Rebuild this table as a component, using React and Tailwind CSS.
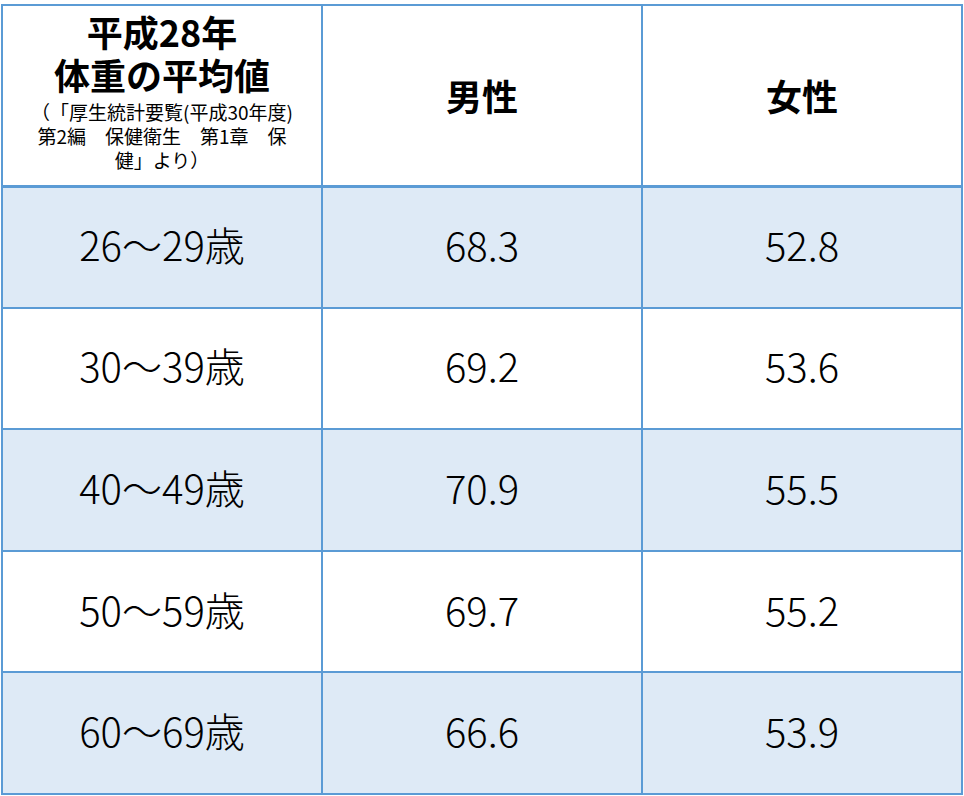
import React from 'react';

const rows = [
  { age: '26～29歳', male: '68.3', female: '52.8' },
  { age: '30～39歳', male: '69.2', female: '53.6' },
  { age: '40～49歳', male: '70.9', female: '55.5' },
  { age: '50～59歳', male: '69.7', female: '55.2' },
  { age: '60～69歳', male: '66.6', female: '53.9' },
];

export default function App() {
  return (
    <div
      className="w-[964px] h-[796px] bg-white pt-[4px] pl-[1px]"
      style={{ fontFamily: '"Noto Sans CJK JP", "Noto Sans", sans-serif' }}
    >
      <table className="w-[960px] border-collapse table-fixed text-black">
        <thead>
          <tr className="h-[181px]">
            <th className="w-[320px] border-2 border-b-[3px] border-[#5b9bd5] p-0 align-middle font-bold">
              <div className="text-[36px] leading-[43px] -mt-[8px]">平成28年</div>
              <div className="text-[36px] leading-[43px]">体重の平均値</div>
              <div className="text-[19px] leading-[24px] font-normal mt-[4px]">
                <span className="inline-block w-[19px] text-right">（</span>
                <span className="inline-block w-[19px] text-left">「</span>
                厚生統計要覧(平成30年度)
                <br />
                第2編　保健衛生　第1章　保
                <br />
                健」より）
              </div>
            </th>
            <th className="w-[320px] border-2 border-b-[3px] border-[#5b9bd5] text-[36px] font-bold align-middle">
              男性
            </th>
            <th className="w-[320px] border-2 border-b-[3px] border-[#5b9bd5] text-[36px] font-bold align-middle">
              女性
            </th>
          </tr>
        </thead>
        <tbody>
          {rows.map((r, i) => (
            <tr key={r.age} className={`h-[121.6px] ${i % 2 === 0 ? 'bg-[#deeaf6]' : 'bg-white'}`}>
              <td className="border-2 border-[#5b9bd5] text-center text-[40px] leading-none font-light pb-[6px]">{r.age}</td>
              <td className="border-2 border-[#5b9bd5] text-center text-[40px] leading-none font-light pb-[6px]">{r.male}</td>
              <td className="border-2 border-[#5b9bd5] text-center text-[40px] leading-none font-light pb-[6px]">{r.female}</td>
            </tr>
          ))}
        </tbody>
      </table>
    </div>
  );
}
